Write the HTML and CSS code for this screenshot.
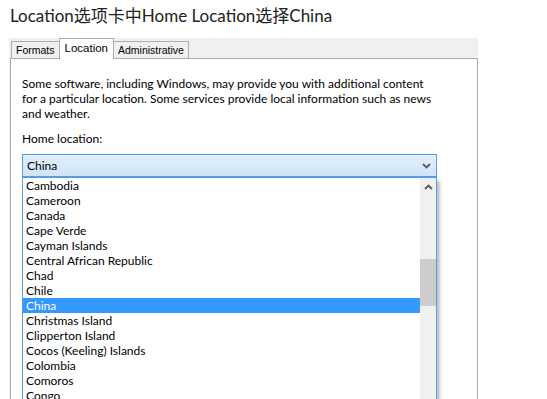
FILE: index.html
```html
<!DOCTYPE html>
<html lang="zh-CN">
<head>
    <meta charset="UTF-8">
    <title>Home Location</title>
    <link rel="stylesheet" href="styles.css">
</head>
<body>
    <h1 class="title">Location选项卡中Home Location选择China</h1>

    <div class="dialog">
        <div class="tabs">
            <div class="tab">Formats</div>
            <div class="tab active">Location</div>
            <div class="tab">Administrative</div>
        </div>

        <div class="panel">
            <p class="intro">Some software, including Windows, may provide you with additional content for a particular location. Some services provide local information such as news and weather.</p>
            <div class="label">Home location:</div>

            <div class="combo">
                <span>China</span>
                <svg class="chevron" width="9" height="6" viewBox="0 0 9 6">
                    <path d="M1 1 L4.5 4.5 L8 1" fill="none" stroke="#5a5a5a" stroke-width="1.8"/>
                </svg>
            </div>

            <div class="dropdown">
                <ul class="options">
                    <li>Cambodia</li>
                    <li>Cameroon</li>
                    <li>Canada</li>
                    <li>Cape Verde</li>
                    <li>Cayman Islands</li>
                    <li>Central African Republic</li>
                    <li>Chad</li>
                    <li>Chile</li>
                    <li class="selected">China</li>
                    <li>Christmas Island</li>
                    <li>Clipperton Island</li>
                    <li>Cocos (Keeling) Islands</li>
                    <li>Colombia</li>
                    <li>Comoros</li>
                    <li>Congo</li>
                </ul>
                <div class="scrollbar">
                    <div class="arrow">
                        <svg width="9" height="6" viewBox="0 0 9 6">
                            <path d="M1 5 L4.5 1.5 L8 5" fill="none" stroke="#5a5a5a" stroke-width="1.8"/>
                        </svg>
                    </div>
                    <div class="thumb"></div>
                </div>
            </div>
        </div>
    </div>
</body>
</html>
```

FILE: styles.css
```css
/* Region dialog, Location tab */
:root {
    --border: #adadad;
    --face: #f0f0f0;
    --accent: #569de5;
    --highlight: #3399ff;
}

html, body {
    overflow: hidden;
}

body {
    margin: 0;
    background: white;
    font-family: Lato, "Noto Sans", sans-serif;
    color: black;
}

.title {
    margin: 0;
    padding: 5px 10px 0;
    height: 33px;
    font-family: Lato, "Noto Sans CJK SC", sans-serif;
    font-weight: normal;
    font-size: 17px;
    line-height: 22px;
    color: #222;
}

.dialog {
    margin-left: 9px;
    width: 469px;
    background: var(--face);
}

.tabs {
    display: flex;
    align-items: flex-end;
    height: 20px;
    padding-left: 2px;
}

.tab {
    height: 16px;
    padding: 0 4px;
    border: 1px solid var(--border);
    border-bottom: none;
    margin-right: -1px;
    font-family: "Liberation Sans", Arial, sans-serif;
    font-size: 10.5px;
    line-height: 16px;
    color: #000;
}

.tab.active {
    position: relative;
    height: 20px;
    margin-bottom: -1px;
    padding: 0 5px;
    background: white;
    font-size: 11.5px;
    line-height: 19px;
}

.panel {
    margin-left: 1px;
    width: 455px;
    height: 400px;
    border: 1px solid var(--border);
    background: white;
    padding: 17px 0 0 11px;
}

.intro {
    margin: 0;
    width: 416px;
    font-size: 12px;
    line-height: 15px;
}

.label {
    margin-top: 10px;
    font-size: 12px;
    line-height: 15px;
}

.combo {
    display: flex;
    align-items: center;
    justify-content: space-between;
    box-sizing: border-box;
    margin-top: 8px;
    width: 415px;
    height: 23px;
    padding: 0 5px 0 4px;
    border: 1px solid var(--accent);
    background: linear-gradient(#e3effb, #cfe4f8);
    font-size: 12px;
}

.dropdown {
    display: grid;
    grid-template-columns: 1fr 16px;
    box-sizing: border-box;
    width: 415px;
    height: 240px;
    border: 1px solid var(--accent);
    background: white;
    box-shadow: 3px 4px 3px rgba(0, 0, 0, 0.25);
}

.options {
    list-style: none;
    margin: 0;
    padding: 0;
}

.options li {
    height: 15px;
    padding-left: 3px;
    font-size: 12px;
    line-height: 15px;
}

.options li.selected {
    background: var(--highlight);
    color: white;
}

.scrollbar {
    background: var(--face);
}

.arrow {
    display: flex;
    justify-content: center;
    align-items: center;
    height: 17px;
}

.thumb {
    margin-top: 64px;
    height: 47px;
    background: #cdcdcd;
}
```
